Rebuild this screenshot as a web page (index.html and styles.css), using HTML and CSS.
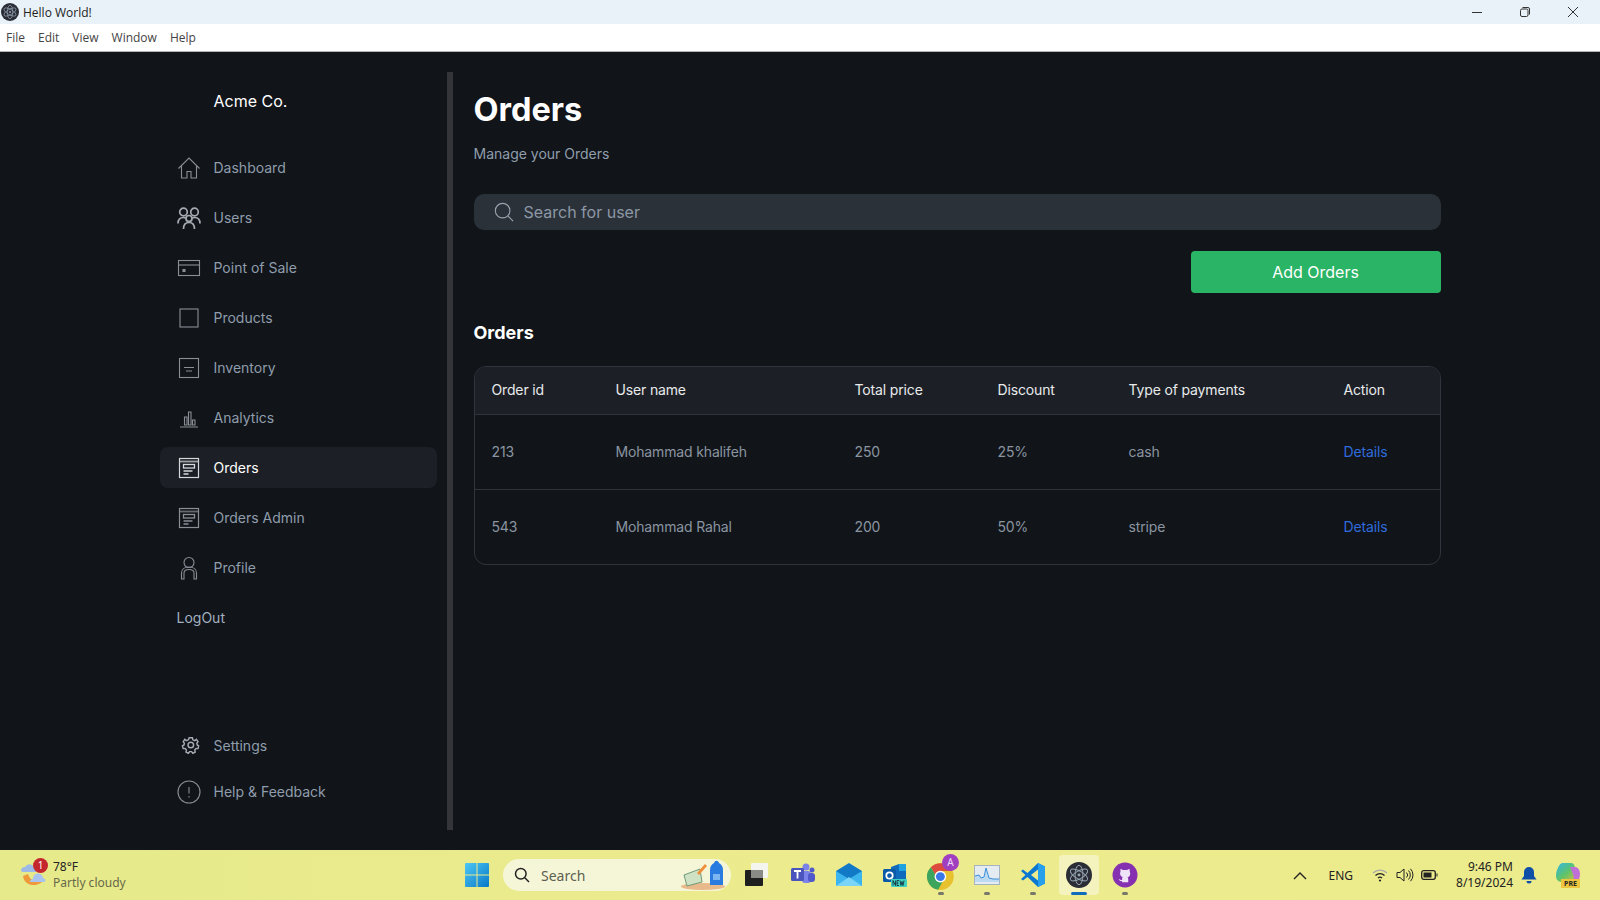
FILE: index.html
```html
<!DOCTYPE html>
<html lang="en">
<head>
    <meta charset="UTF-8">
    <meta name="viewport" content="width=device-width, initial-scale=1.0">
    <title>Hello World!</title>
    <link rel="stylesheet" href="styles.css">
</head>
<body>
    <svg class="defs" width="0" height="0">
        <symbol id="i-electron" viewBox="0 0 32 32">
            <circle cx="16" cy="16" r="16" fill="#2a2d36"/>
            <g fill="none" stroke="#97a6b4" stroke-width="1.2">
                <ellipse cx="16" cy="16" rx="12" ry="4.800" transform="rotate(30 16 16)"/>
                <ellipse cx="16" cy="16" rx="12" ry="4.800" transform="rotate(90 16 16)"/>
                <ellipse cx="16" cy="16" rx="12" ry="4.800" transform="rotate(150 16 16)"/>
            </g>
            <circle cx="16" cy="16" r="1.800" fill="#97a6b4"/>
        </symbol>
        <symbol id="i-orders" viewBox="0 0 24 24">
            <rect x="2.500" y="2.500" width="19" height="19" fill="none" stroke="currentColor" stroke-width="1.200"/>
            <path d="M2.500 5.500h19" fill="none" stroke="currentColor" stroke-width="1.800" opacity=".7"/>
            <rect x="6.500" y="8.500" width="11" height="3.500" fill="none" stroke="currentColor" stroke-width="1.300"/>
            <path d="M6.500 15h9M6.500 18h5" fill="none" stroke="currentColor" stroke-width="1.300"/>
        </symbol>
    </svg>

    <div class="window">
        <header class="titlebar">
            <svg class="app-icon" width="18" height="18"><use href="#i-electron"/></svg>
            <span class="window-title">Hello World!</span>
            <div class="window-controls">
                <svg width="12" height="12" viewBox="0 0 12 12"><path d="M1 6.500h10" stroke="#333" fill="none"/></svg>
                <svg width="12" height="12" viewBox="0 0 12 12"><rect x="1.500" y="3" width="7.500" height="7.500" rx="1.500" fill="none" stroke="#333"/><path d="M3.500 1.500h5.500a1.500 1.500 0 0 1 1.500 1.500v5.500" fill="none" stroke="#333"/></svg>
                <svg width="12" height="12" viewBox="0 0 12 12"><path d="M1 1l10 10M11 1L1 11" stroke="#333" fill="none"/></svg>
            </div>
        </header>
        <nav class="menubar">
            <span>File</span><span>Edit</span><span>View</span><span>Window</span><span>Help</span>
        </nav>

        <div class="app">
            <div class="shell">
                <aside class="sidebar">
                    <div class="brand">Acme Co.</div>
                    <ul class="nav-list">
                        <li class="nav-item">
                            <svg class="nav-icon" viewBox="0 0 24 24"><path d="M1.500 12.500L12 2l10.500 10.500M4.500 10v12h5.500v-6.500h4V22h5.500V10"/></svg>
                            Dashboard
                        </li>
                        <li class="nav-item">
                            <svg class="nav-icon thick" viewBox="0 0 24 24"><circle cx="6.500" cy="6" r="3.800"/><circle cx="17.500" cy="6" r="3.800"/><circle cx="12" cy="12.500" r="3"/><path d="M1 17.500c0-4 2-6 5.500-6 1 0 1.500.2 2.500.8M23 17.500c0-4-2-6-5.500-6-1 0-1.500.2-2.500.8M6.500 23c0-4 2-6.500 5.500-6.500s5.500 2.500 5.500 6.500"/></svg>
                            Users
                        </li>
                        <li class="nav-item">
                            <svg class="nav-icon" viewBox="0 0 24 24"><rect x="1.500" y="4.500" width="21" height="15"/><path d="M1.500 9h21"/><rect x="6" y="13.500" width="2" height="2" fill="currentColor"/></svg>
                            Point of Sale
                        </li>
                        <li class="nav-item">
                            <svg class="nav-icon" viewBox="0 0 24 24"><rect x="3" y="3" width="18" height="18"/></svg>
                            Products
                        </li>
                        <li class="nav-item">
                            <svg class="nav-icon" viewBox="0 0 24 24"><rect x="2.500" y="2.500" width="19" height="19"/><path d="M7 11.500h10M9 15h6"/></svg>
                            Inventory
                        </li>
                        <li class="nav-item">
                            <svg class="nav-icon" viewBox="0 0 24 24"><path d="M3 21h18M7.500 11h2.500v8H7.500zM11.500 6h2.500v13h-2.500zM15.500 14h2.500v5h-2.500z"/></svg>
                            Analytics
                        </li>
                        <li class="nav-item active">
                            <svg class="nav-icon" width="24" height="24"><use href="#i-orders"/></svg>
                            Orders
                        </li>
                        <li class="nav-item">
                            <svg class="nav-icon" width="24" height="24"><use href="#i-orders"/></svg>
                            Orders Admin
                        </li>
                        <li class="nav-item">
                            <svg class="nav-icon" viewBox="0 0 24 24"><circle cx="12" cy="6.500" r="5"/><path d="M4.500 23v-6c0-3.500 3-6 7.500-6s7.500 2.500 7.500 6v6h-2.500v-6c0-2.500-2-3.500-5-3.500s-5 1-5 3.500v6z"/></svg>
                            Profile
                        </li>
                        <li class="nav-item logout">LogOut</li>
                    </ul>
                    <ul class="nav-list nav-bottom">
                        <li class="nav-item short">
                            <svg class="nav-icon gear" viewBox="0 0 24 24"><circle cx="13" cy="12" r="3.500"/><path d="M11 3h4l.5 2.500 2.500 1 2-1.500 2 3-1.500 2 .5 2 2 1-1 3.500-2.500-.2-1.500 2 .5 2.500-3 1.500-1.500-2h-2.500l-1.500 2-3-1.500.5-2.500-1.500-2-2.500.2-1-3.500 2-1 .5-2-1.500-2 2-3 2 1.500 2.500-1z"/></svg>
                            Settings
                        </li>
                        <li class="nav-item short">
                            <svg class="nav-icon" viewBox="0 0 24 24"><circle cx="12" cy="12" r="11"/><path d="M12 7v6.500M12 16v1.500"/></svg>
                            Help &amp; Feedback
                        </li>
                    </ul>
                </aside>
                <div class="divider"></div>
                <main class="content">
                    <h1>Orders</h1>
                    <p class="subtitle">Manage your Orders</p>
                    <div class="search-box">
                        <svg class="search-icon" viewBox="0 0 22 22"><circle cx="9.500" cy="9.500" r="8"/><path d="M15.500 15.500l5.500 5.500"/></svg>
                        <span>Search for user</span>
                    </div>
                    <div class="actions">
                        <button class="add-button">Add Orders</button>
                    </div>
                    <h2>Orders</h2>
                    <div class="table-wrap">
                        <table class="orders-table">
                            <colgroup>
                                <col class="col-id"><col class="col-user"><col class="col-total"><col class="col-discount"><col class="col-type"><col>
                            </colgroup>
                            <thead>
                                <tr>
                                    <th>Order id</th><th>User name</th><th>Total price</th><th>Discount</th><th>Type of payments</th><th>Action</th>
                                </tr>
                            </thead>
                            <tbody>
                                <tr>
                                    <td>213</td><td>Mohammad khalifeh</td><td>250</td><td>25%</td><td>cash</td><td><a class="details">Details</a></td>
                                </tr>
                                <tr>
                                    <td>543</td><td>Mohammad Rahal</td><td>200</td><td>50%</td><td>stripe</td><td><a class="details">Details</a></td>
                                </tr>
                            </tbody>
                        </table>
                    </div>
                </main>
            </div>
        </div>

        <footer class="taskbar">
            <div class="weather">
                <div class="weather-icon">
                    <svg width="28" height="32" viewBox="0 0 28 32">
                        <path d="M3 17c1 9 12 12 19 6-6 0-12-1-14-8z" fill="#f0993a"/>
                        <path d="M1 12a4 4 0 0 1 4-4 5 5 0 0 1 9 0h2v5H3a2.500 2.500 0 0 1-2-1z" fill="#9db9e6"/>
                        <path d="M10 23a3 3 0 0 1 3-3 5 5 0 0 1 10-1 3 3 0 0 1 2 4z" fill="#a9c4ee"/>
                    </svg>
                    <span class="weather-badge">1</span>
                </div>
                <div class="weather-text">
                    <span class="temp">78°F</span>
                    <span class="sky">Partly cloudy</span>
                </div>
            </div>
            <div class="task-center">
                <div class="task-btn start">
                    <svg width="24" height="24" viewBox="0 0 24 24">
                        <defs><linearGradient id="win" x1="0" y1="0" x2="1" y2="1"><stop offset="0" stop-color="#4cc8f4"/><stop offset="1" stop-color="#0a78c8"/></linearGradient></defs>
                        <path d="M0 1a1 1 0 0 1 1-1h10.500v11.500H0zM12.500 0H23a1 1 0 0 1 1 1v10.500H12.500zM0 12.500h11.500V24H1a1 1 0 0 1-1-1zM12.500 12.500H24V23a1 1 0 0 1-1 1H12.500z" fill="url(#win)"/>
                    </svg>
                </div>
                <div class="task-search">
                    <svg class="task-search-icon" viewBox="0 0 16 16"><circle cx="6.800" cy="6.800" r="5.300"/><path d="M10.800 10.800L15 15"/></svg>
                    <span>Search</span>
                    <svg class="task-search-art" width="46" height="32" viewBox="0 0 46 32">
                        <ellipse cx="23" cy="27.500" rx="22" ry="3.500" fill="#e8b98a"/>
                        <path d="M4 16l16-6 2 13-15 4z" fill="#cfe3c4" stroke="#6f9a7a"/>
                        <path d="M17 14l8-9 2 2-8 9z" fill="#ef8f3a"/>
                        <path d="M30 26V11c0-4 2-6 4-7 1-3 4-3 5 0 2 1 4 3 4 7v15z" fill="#2a7be0"/>
                        <rect x="33" y="15" width="7" height="6" fill="#7cb5f2"/>
                    </svg>
                </div>
                <div class="task-btn">
                    <svg width="26" height="26" viewBox="0 0 26 26">
                        <rect x="7" y="1" width="17" height="15" rx="1" fill="#f5f5f0"/>
                        <rect x="1" y="8" width="18" height="16" rx="1" fill="#1f1f1f"/>
                        <rect x="7" y="8" width="12" height="8" fill="#8a8a86"/>
                    </svg>
                </div>
                <div class="task-btn">
                    <svg width="26" height="26" viewBox="0 0 26 26">
                        <circle cx="16" cy="5" r="3.500" fill="#7b83eb"/>
                        <circle cx="22" cy="8" r="2.500" fill="#5059c9"/>
                        <rect x="12" y="9" width="9" height="12" rx="3" fill="#7b83eb"/>
                        <rect x="18" y="11" width="7" height="9" rx="3" fill="#5059c9"/>
                        <rect x="1" y="6" width="13" height="13" rx="1.500" fill="#4b53bc"/>
                        <path d="M4 9h7M7.500 9v7.500" stroke="#fff" stroke-width="1.800" fill="none"/>
                    </svg>
                </div>
                <div class="task-btn">
                    <svg width="26" height="26" viewBox="0 0 26 26">
                        <path d="M0 9L13 1l13 8v15H0z" fill="#1279c7"/>
                        <path d="M0 9l13 8 13-8v15H0z" fill="#3cb5ee"/>
                        <path d="M0 24l13-9 13 9z" fill="#7ad4f8"/>
                    </svg>
                </div>
                <div class="task-btn">
                    <svg width="26" height="26" viewBox="0 0 26 26">
                        <path d="M9 5l8-3h7v15H9z" fill="#0f6cbd"/>
                        <path d="M17 2h7v7h-7z" fill="#1ea3e0"/>
                        <rect x="1" y="7" width="13" height="13" rx="1.500" fill="#0a5aa8"/>
                        <circle cx="7.500" cy="13.500" r="3.200" fill="none" stroke="#fff" stroke-width="1.800"/>
                        <rect x="9" y="17" width="16" height="8" rx="1" fill="#3fd0c0"/>
                        <path d="M11 23.500v-5l2.500 5v-5M17 18.500h-2v5h2M15 21h1.500M18 18.500l1 5 1-4 1 4 1-5" fill="none" stroke="#123" stroke-width=".8"/>
                    </svg>
                </div>
                <div class="task-btn has-dot">
                    <svg class="chrome" width="26" height="26" viewBox="0 0 26 26">
                        <circle cx="12" cy="14" r="12" fill="#e8c12e"/>
                        <path d="M12 2a12 12 0 0 1 11 7H12A5 5 0 0 0 7.300 12L3.500 5.500A12 12 0 0 1 12 2z" fill="#dd4b3e"/>
                        <path d="M3.500 5.500L9 15a5 5 0 0 0 4.800 3.800L10 25.800A12 12 0 0 1 3.500 5.500z" fill="#3ba55d"/>
                        <circle cx="12" cy="14" r="5.200" fill="#fff"/>
                        <circle cx="12" cy="14" r="4" fill="#3b78e7"/>
                    </svg>
                    <span class="profile-badge">A</span>
                </div>
                <div class="task-btn has-dot">
                    <svg width="26" height="20" viewBox="0 0 26 20">
                        <rect x=".5" y=".5" width="25" height="19" fill="#e4ecf2" stroke="#a6b4bf"/>
                        <path d="M1 17v-6l4-1 2 3 3-1 2-9 3 10 4 1 3 0 3 0v3z" fill="#bcdaf2"/>
                        <path d="M1 11l4-1 2 3 3-1 2-9 3 10 4 1 6 0" fill="none" stroke="#3a8fd8"/>
                    </svg>
                </div>
                <div class="task-btn has-dot">
                    <svg width="26" height="26" viewBox="0 0 26 26">
                        <path d="M18 1l7 3.500v17L18 25 7.500 15 3 18.500 1 17l4.500-4L1 9l2-1.500L7.500 11z" fill="#0a78d0"/>
                        <path d="M18 7.500v11L11 13z" fill="#eceb8e"/>
                        <path d="M18 1l7 3.500v17L18 25z" fill="#27a0ec"/>
                    </svg>
                </div>
                <div class="task-btn active">
                    <svg width="26" height="26"><use href="#i-electron"/></svg>
                </div>
                <div class="task-btn has-dot">
                    <svg width="26" height="26" viewBox="0 0 26 26">
                        <circle cx="13" cy="13" r="12.500" fill="#8430b0"/>
                        <g transform="translate(2.300 2.300) scale(.82)">
                            <path d="M7.500 5.500l3 1.500h5l3-1.500.5 4c1 2.500.5 5.500-3 6.500 1 .5 1 1.500 1 2.500v3.500H9.500v-1.500c-2 .5-3.500-.5-4-2.500 1 .5 2 1.500 4 1v-1c0-1 0-1.500 1-2.500-3.500-1-4-4-3-6.500z" fill="#efe3f7"/>
                        </g>
                    </svg>
                </div>
            </div>
            <div class="tray">
                <svg class="tray-icon" width="14" height="9" viewBox="0 0 14 9"><path d="M1 8l6-6 6 6" fill="none" stroke="#222" stroke-width="1.400"/></svg>
                <span class="lang">ENG</span>
                <svg class="tray-icon" width="16" height="14" viewBox="0 0 16 14"><path d="M1 5a10 10 0 0 1 14 0" stroke="#aaa" fill="none" stroke-width="1.300"/><path d="M3.500 7.500a6.500 6.500 0 0 1 9 0M6 10a3 3 0 0 1 4 0" stroke="#222" fill="none" stroke-width="1.300"/><circle cx="8" cy="12.500" r="1.100" fill="#222"/></svg>
                <svg class="tray-icon" width="18" height="14" viewBox="0 0 18 14"><path d="M1 4.500h3L8 1v12L4 9.500H1z" fill="none" stroke="#222"/><path d="M10.500 4.500a3.500 3.500 0 0 1 0 5M12.500 2.500a6.500 6.500 0 0 1 0 9M14.500 .8a9 9 0 0 1 0 12.400" fill="none" stroke="#222"/></svg>
                <svg class="tray-icon battery" width="17" height="10" viewBox="0 0 17 10"><rect x=".7" y=".7" width="13.600" height="8.600" rx="2" fill="none" stroke="#222" stroke-width="1.300"/><rect x="2.500" y="2.500" width="8" height="5" fill="#222"/><path d="M15.500 3.500h1v3h-1z" fill="#222"/></svg>
                <div class="clock">
                    <span>9:46 PM</span>
                    <span>8/19/2024</span>
                </div>
                <svg class="tray-icon bell" width="16" height="17" viewBox="0 0 16 17"><path d="M8 0a5 5 0 0 1 5 5v4l2.500 3.500H.5L3 9V5a5 5 0 0 1 5-5z" fill="#0f4fa8"/><path d="M5.500 14h5a2.500 2.500 0 0 1-5 0z" fill="#0f4fa8"/></svg>
                <div class="copilot">
                    <svg width="24" height="20" viewBox="0 0 24 20">
                        <defs><linearGradient id="cop" x1="0" y1="0" x2="1" y2="1"><stop offset="0" stop-color="#2fb6e8"/><stop offset=".5" stop-color="#5fc36a"/><stop offset="1" stop-color="#e8b93a"/></linearGradient></defs>
                        <path d="M7 0h8c2 0 3 1 3.500 3L22 16c-1 2-3 3-5 3H6c-3 0-6-2-6-6 0-5 3-13 7-13z" fill="url(#cop)"/>
                        <path d="M14 4h5c3 0 5 3 5 7 0 3-1 6-3 8h-5c2-2 2-5 1-8z" fill="#c06fd8"/>
                    </svg>
                    <span class="pre-tag">PRE</span>
                </div>
            </div>
        </footer>
    </div>
</body>
</html>
```

FILE: styles.css
```css
/* Window frame */
* {
    box-sizing: border-box;
}
html, body {
    margin: 0;
    padding: 0;
    height: 100%;
    overflow: hidden;
}
body {
    font-family: Inter, "Liberation Sans", sans-serif;
    background-color: #111419;
}
.defs {
    position: absolute;
}
.window {
    display: flex;
    flex-direction: column;
    height: 900px;
}
.titlebar {
    display: flex;
    align-items: center;
    height: 24px;
    padding-left: 1px;
    background-color: #e9f2f8;
    color: #222;
    font-family: "Open Sans", sans-serif;
    font-size: 12px;
    flex-shrink: 0;
}
.app-icon {
    margin-right: 4px;
}
.window-controls {
    display: flex;
    align-items: center;
    gap: 36px;
    margin-left: auto;
    padding-right: 21px;
}
.menubar {
    display: flex;
    align-items: center;
    gap: 13px;
    height: 28px;
    padding-left: 6px;
    background-color: #fff;
    border-bottom: 1px solid #b5b5b5;
    color: #444;
    font-family: "Open Sans", sans-serif;
    font-size: 12px;
    flex-shrink: 0;
}

/* App area */
.app {
    flex: 1;
    background-color: #111419;
    padding: 20px 0;
    min-height: 0;
}
.shell {
    display: flex;
    width: 1281px;
    height: 100%;
    margin: 0 auto;
}
.sidebar {
    display: flex;
    flex-direction: column;
    width: 277px;
    flex-shrink: 0;
}
.brand {
    padding: 19px 0 0 54px;
    height: 75px;
    color: #fff;
    font-size: 16px;
    line-height: 20px;
}
.nav-list {
    list-style: none;
    margin: 0;
    padding: 0;
    display: flex;
    flex-direction: column;
    gap: 9px;
}
.nav-bottom {
    margin-top: auto;
    gap: 5px;
    padding-bottom: 18px;
}
.nav-item {
    display: flex;
    align-items: center;
    gap: 13px;
    height: 41px;
    padding-left: 17px;
    border-radius: 8px;
    color: #8f9dac;
    font-size: 14px;
}
.nav-item.active {
    background-color: #1c2026;
    color: #fff;
}
.nav-item.logout {
    color: #a3b1c0;
}
.nav-icon {
    width: 24px;
    height: 24px;
    fill: none;
    stroke: currentColor;
    stroke-width: 1.1;
    color: #8a8f96;
    flex-shrink: 0;
}
.nav-icon.thick {
    stroke-width: 1.7;
    color: #a5abb3;
}
.nav-icon.gear {
    transform: translate(1px, -1px) scale(0.8);
    stroke-width: 1.800;
    color: #a5abb3;
}
.active .nav-icon {
    color: #d5d7da;
}
.divider {
    width: 6px;
    margin-left: 10px;
    background-color: #333538;
    flex-shrink: 0;
}

/* Main content */
.content {
    flex: 1;
    padding-left: 21px;
    min-width: 0;
}
h1 {
    margin: 18px 0 0;
    height: 40px;
    line-height: 40px;
    color: #fff;
    font-size: 32.500px;
    font-weight: 700;
}
.subtitle {
    margin: 14px 0 0;
    line-height: 20px;
    color: #8f9dac;
    font-size: 14px;
}
.search-box {
    display: flex;
    align-items: center;
    gap: 10px;
    height: 36px;
    margin-top: 30px;
    padding-left: 20px;
    border-radius: 10px;
    background-color: #2b3139;
    color: #8c98a5;
    font-size: 16px;
}
.search-icon {
    width: 20px;
    height: 20px;
    fill: none;
    stroke: #9aa3ad;
    stroke-width: 1.2;
}
.actions {
    display: flex;
    justify-content: flex-end;
    margin-top: 21px;
}
.add-button {
    width: 250px;
    height: 42px;
    border: none;
    border-radius: 4px;
    background-color: #2ab465;
    color: #fff;
    font-family: Inter, sans-serif;
    font-size: 16px;
}
h2 {
    margin: 28px 0 0;
    line-height: 24px;
    color: #fff;
    font-size: 18px;
    font-weight: 700;
}
.table-wrap {
    margin-top: 21px;
    border: 1px solid #30353d;
    border-radius: 12px;
    overflow: hidden;
}
.orders-table {
    width: 100%;
    border-collapse: collapse;
    table-layout: fixed;
    font-size: 14px;
    letter-spacing: -0.15px;
}
.col-id { width: 124px; }
.col-user { width: 239px; }
.col-total { width: 143px; }
.col-discount { width: 131px; }
.col-type { width: 215px; }
.orders-table th {
    height: 47px;
    padding: 0 0 2px 17px;
    background-color: #1c2026;
    border-bottom: 1px solid #30353d;
    color: #e8eaec;
    font-weight: 400;
    text-align: left;
}
.orders-table td {
    height: 75px;
    padding: 0 0 1px 17px;
    color: #8a95a1;
    border-bottom: 1px solid #30353d;
}
.orders-table tbody tr:last-child td {
    border-bottom: none;
}
.details {
    color: #2f6bdc;
}

/* Taskbar */
.taskbar {
    display: grid;
    grid-template-columns: 454px auto 1fr;
    align-items: center;
    height: 50px;
    background: linear-gradient(90deg, #e6ea8a 0%, #eceb8e 50%, #ecec8c 100%);
    color: #222;
    font-family: "Noto Sans", sans-serif;
    flex-shrink: 0;
}
.weather {
    display: flex;
    align-items: center;
    gap: 5px;
    padding-left: 20px;
}
.weather-icon {
    position: relative;
    width: 28px;
    height: 32px;
}
.weather-badge {
    position: absolute;
    top: -1px;
    right: 0;
    width: 15px;
    height: 15px;
    border-radius: 50%;
    background-color: #c4262e;
    color: #fff;
    font-size: 10px;
    line-height: 15px;
    text-align: center;
}
.weather-text {
    display: flex;
    flex-direction: column;
    font-size: 12px;
    line-height: 16px;
}
.sky {
    color: #66684a;
}
.task-center {
    display: flex;
    align-items: center;
}
.task-btn {
    position: relative;
    display: flex;
    align-items: center;
    justify-content: center;
    width: 46px;
    height: 40px;
}
.task-btn.start {
    margin-right: 3px;
}
.task-btn.active {
    width: 40px;
    margin: 0 3px;
    border-radius: 4px;
    background-color: #f4f3bd;
}
.task-btn.has-dot::after,
.task-btn.active::after {
    content: "";
    position: absolute;
    bottom: 0;
    left: 50%;
    width: 6px;
    height: 3px;
    margin-left: -3px;
    border-radius: 2px;
    background-color: #77776a;
}
.task-btn.active::after {
    width: 16px;
    margin-left: -8px;
    background-color: #0f6cbd;
}
.chrome {
    width: 29px;
    height: 29px;
}
.profile-badge {
    position: absolute;
    top: -1px;
    left: 24px;
    width: 17px;
    height: 17px;
    border-radius: 50%;
    background-color: #a040c0;
    color: #f0d8f8;
    font-size: 10px;
    line-height: 17px;
    text-align: center;
}
.task-search {
    display: flex;
    align-items: center;
    width: 228px;
    height: 32px;
    margin-right: 3px;
    padding-left: 11px;
    border-radius: 16px;
    background-color: #f5f6d8;
    color: #5d5f50;
    font-size: 14px;
}
.task-search-icon {
    width: 16px;
    height: 16px;
    margin-right: 11px;
    fill: none;
    stroke: #222;
    stroke-width: 1.500;
}
.task-search-art {
    margin-left: auto;
    margin-right: 5px;
}
.tray {
    display: flex;
    align-items: center;
    justify-content: flex-end;
    padding-right: 20px;
}
.lang {
    margin: 0 19px 0 21px;
    font-size: 12px;
}
.tray-icon {
    flex-shrink: 0;
}
.tray-icon + .tray-icon {
    margin-left: 8px;
}
.tray-icon.battery {
    margin-left: 7px;
}
.clock {
    display: flex;
    flex-direction: column;
    align-items: flex-end;
    margin-left: 18px;
    font-size: 12px;
    line-height: 16px;
}
.tray-icon.bell {
    margin-left: 8px;
}
.copilot {
    position: relative;
    width: 24px;
    height: 24px;
    margin-left: 19px;
}
.pre-tag {
    position: absolute;
    bottom: -1px;
    left: 5px;
    width: 19px;
    height: 9px;
    background-color: #edc53f;
    font-size: 7px;
    font-weight: 700;
    line-height: 9px;
    text-align: center;
}
```
